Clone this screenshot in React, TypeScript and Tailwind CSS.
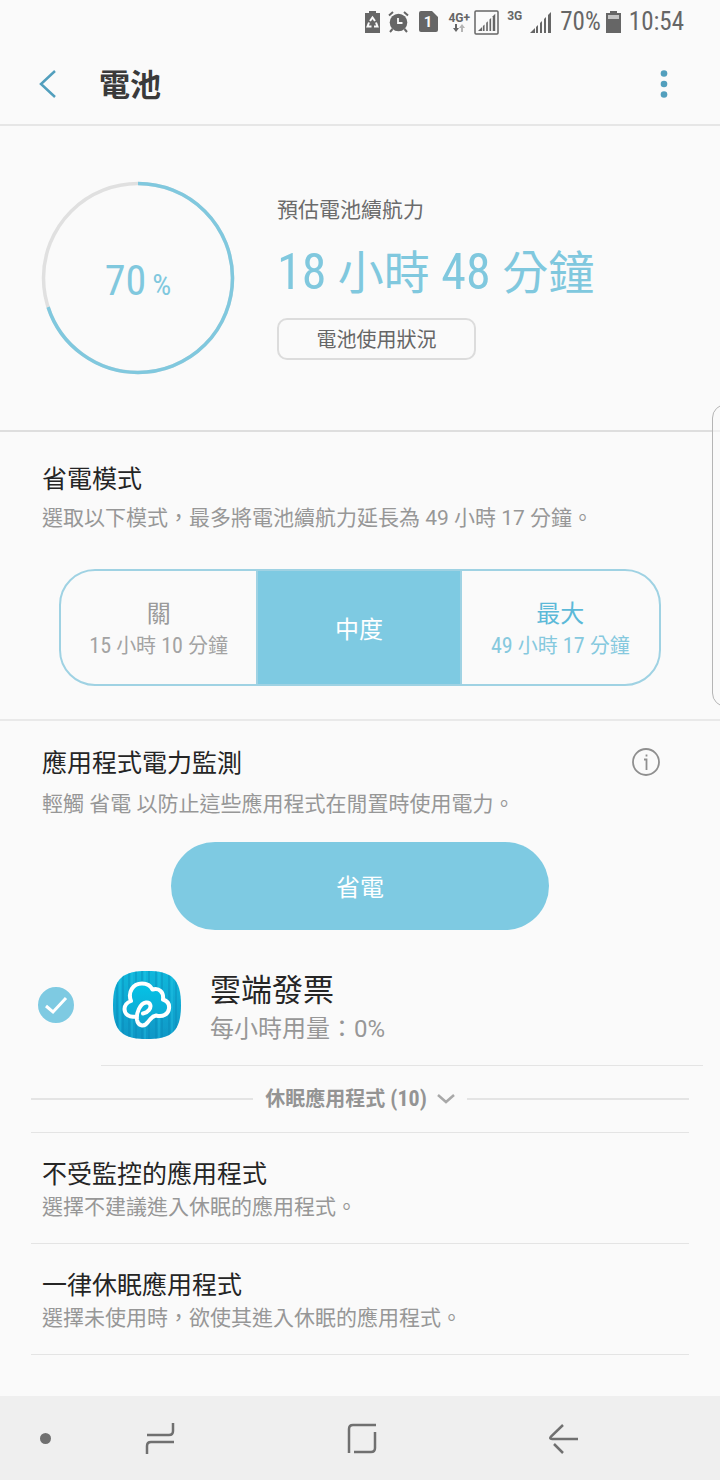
import { useState } from "react";
import type { ReactNode } from "react";

const BATTERY_LEVEL = 70;

const modes = [
  { id: "off", label: "關", hours: 15, minutes: 10, labelColor: "text-[#9a9a9a]", estimateColor: "text-[#a3a3a3]" },
  { id: "mid", label: "中度", labelColor: "text-white", estimateColor: "text-white" },
  { id: "max", label: "最大", hours: 49, minutes: 17, labelColor: "text-[#5cb9d8]", estimateColor: "text-[#86c9de]" },
];

const settings = [
  { title: "不受監控的應用程式", description: "選擇不建議進入休眠的應用程式。" },
  { title: "一律休眠應用程式", description: "選擇未使用時，欲使其進入休眠的應用程式。" },
];

function SignalBars() {
  return (
    <g fill="currentColor">
      <path d="M0 22 5 17V22Z" />
      <path d="M6 16 8 14V22H6Z" />
      <path d="M10 12 12 10V22H10Z" />
      <path d="M14 8 16 6V22H14Z" />
      <path d="M18 4 21 1V22H18Z" />
    </g>
  );
}

function StatusBar() {
  return (
    <div className="flex h-11 items-center justify-end pr-9 text-[#666666]">
      <svg className="mr-2 h-[22px] w-[15px]" viewBox="0 0 15 22" aria-hidden>
        <path d="M4 0H11V2H15V22H0V2H4Z" fill="currentColor" />
        <g fill="none" stroke="#fafafa" strokeWidth="2">
          <path d="M5 10 7.500 6.500 10 10" />
          <path d="M11 11.500 12.500 15.500H9" />
          <path d="M4 11.500 2.500 15.500H6.500" />
        </g>
      </svg>
      <svg className="mr-[10px] h-[22px] w-[21px]" viewBox="0 0 21 22" aria-hidden>
        <circle cx="10.500" cy="11.500" r="8.800" fill="currentColor" />
        <path d="M1 4.500 5 1M20 4.500 16 1M4.500 18 2 21M16.500 18 19 21" stroke="currentColor" strokeWidth="2" fill="none" />
        <path d="M10 7V12H14.500" stroke="#fafafa" strokeWidth="1.800" fill="none" />
      </svg>
      <svg className="mr-[10px] h-[22px] w-[19px]" viewBox="0 0 19 22" aria-hidden>
        <path d="M2 0H13L19 6V19Q19 21 17 21H2Q0 21 0 19V2Q0 0 2 0Z" fill="currentColor" />
        <text x="9" y="16" textAnchor="middle" fontSize="15" fontWeight="700" fill="#fafafa">1</text>
      </svg>
      <div className="mr-1 flex w-[22px] flex-col items-center">
        <span className="text-[12px] leading-[12px] font-bold">4G+</span>
        <svg className="h-[8px] w-[12px]" viewBox="0 0 12 8" aria-hidden>
          <path d="M2 0H4V4H6L3 8 0 4H2Z" fill="currentColor" />
          <path d="M8 8H10V4H12L9 0 6 4H8Z" fill="#b5b5b5" />
        </svg>
      </div>
      <svg className="mr-2 h-[25px] w-[25px]" viewBox="0 0 25 25" aria-hidden>
        <rect x="1" y="1" width="23" height="23" rx="1" fill="none" stroke="currentColor" strokeWidth="1.500" />
        <g transform="translate(4 3) scale(0.82)">
          <SignalBars />
        </g>
      </svg>
      <span className="mr-2 mb-3 text-[12px] leading-[12px] font-bold">3G</span>
      <svg className="mr-2 h-[22px] w-[22px]" viewBox="0 0 22 22" aria-hidden>
        <SignalBars />
      </svg>
      <span className="mr-[5px] font-['Roboto_Condensed',Roboto,sans-serif] text-[25px] leading-8">{BATTERY_LEVEL}%</span>
      <svg className="mr-2 h-[22px] w-[15px]" viewBox="0 0 15 22" aria-hidden>
        <path d="M4 0H11V2H15V22H0V2H4Z" fill="currentColor" />
        <path d="M2 4H13V8H2Z" fill="#c4c4c4" />
      </svg>
      <time className="font-['Roboto_Condensed',Roboto,sans-serif] text-[25px] leading-8">10:54</time>
    </div>
  );
}

function Header() {
  return (
    <header className="flex h-[82px] items-center border-b-2 border-[#e6e6e6] pr-[46px] pl-[38px]">
      <button type="button" aria-label="返回" className="flex h-12 w-[61px] items-center">
        <svg className="h-[28px] w-[18px]" viewBox="0 0 18 28" fill="none" stroke="#529fbd" strokeWidth="2.500" aria-hidden>
          <path d="M17 1 3 14 17 27" />
        </svg>
      </button>
      <h1 className="flex-1 pt-1 text-[31px] leading-10 font-bold text-[#3a3a3a]">電池</h1>
      <button type="button" aria-label="更多選項" className="flex h-12 w-[20px] items-center justify-center">
        <svg className="h-[28px] w-[8px]" viewBox="0 0 8 28" fill="#529fbd" aria-hidden>
          <circle cx="4" cy="3.500" r="3.300" />
          <circle cx="4" cy="14" r="3.300" />
          <circle cx="4" cy="24.500" r="3.300" />
        </svg>
      </button>
    </header>
  );
}

function BatteryRing({ level }: { level: number }) {
  return (
    <div className="grid size-[196px] shrink-0 place-items-center">
      <svg className="col-start-1 row-start-1 size-full -rotate-90" viewBox="0 0 196 196" fill="none" strokeWidth="3.500" aria-hidden>
        <circle cx="98" cy="98" r="94.500" stroke="#e0e0e0" />
        <circle cx="98" cy="98" r="94.500" stroke="#80c8de" pathLength="100" strokeDasharray={`${level} 100`} />
      </svg>
      <p className="col-start-1 row-start-1 flex items-baseline gap-[6px] pt-[6px] font-['Roboto_Condensed',Roboto,sans-serif] text-[#80c8de]">
        <span className="text-[42px] leading-[48px]">{level}</span>
        <span className="text-[30px] leading-8">%</span>
      </p>
    </div>
  );
}

function CloudAppIcon() {
  return (
    <svg className="size-[70px] shrink-0" viewBox="0 0 70 70" aria-hidden>
      <defs>
        <linearGradient id="iconBase" x1="0" y1="0" x2="0" y2="1">
          <stop offset="0" stopColor="#10b8dc" />
          <stop offset="1" stopColor="#1097c6" />
        </linearGradient>
        <linearGradient id="cloudFill" x1="0" y1="0" x2="0" y2="1">
          <stop offset="0" stopColor="#04c3e6" />
          <stop offset="1" stopColor="#11a5d0" />
        </linearGradient>
        <clipPath id="iconClip">
          <path d="M35 1C59 1 69 8 69 35S59 69 35 69 1 62 1 35 11 1 35 1Z" />
        </clipPath>
      </defs>
      <g clipPath="url(#iconClip)">
        <rect width="70" height="70" fill="url(#iconBase)" />
        <path d="M5 0V70M11 0V70M17 0V70M24 0V70M30 0V70M37 0V70M44 0V70M50 0V70M57 0V70M64 0V70" stroke="#0a86b5" strokeWidth="1.500" opacity="0.500" />
        <path d="M8 0V70M20 0V70M33 0V70M47 0V70M60 0V70" stroke="#2accea" strokeWidth="1.500" opacity="0.400" />
      </g>
      {/* cloud outline runs on into the letter-like loop at its bottom */}
      <path
        d="M24 46.500C17 48 12.500 44 12.500 39C12.500 35 15 32.500 19 31C15.500 22 21 13.500 30 13.500C35 13.500 38.500 15.500 40.500 19.500C47 17.500 52 22 51 29.500C56 31 57.500 34.500 57 38.500C56.500 44 51 47.500 44 45.500C40 46 38.500 49 36 52C32 57.500 26 56 25 50C24 43 28 33.500 34 32.500C39 32 39.500 37 37 40C35.500 42 33.500 43 31 43.500"
        fill="url(#cloudFill)"
        stroke="#ffffff"
        strokeWidth="4"
        strokeLinecap="round"
        strokeLinejoin="round"
      />
    </svg>
  );
}

function NavButton({ label, children }: { label: string; children: ReactNode }) {
  return (
    <button type="button" aria-label={label} className="flex h-full flex-1 items-center justify-center pt-[2px]">
      <svg className="size-8" viewBox="0 0 32 32" fill="none" stroke="#707070" strokeWidth="2.500" aria-hidden>
        {children}
      </svg>
    </button>
  );
}

function NavBar() {
  return (
    <nav className="mt-auto flex h-[84px] items-center bg-[#efefef] pr-[55px]">
      <div className="w-[59px] pl-10">
        <div className="size-[11px] rounded-full bg-[#707070]" />
      </div>
      <NavButton label="最近使用">
        <path d="M3 12H25Q29 12 29 8V0" />
        <path d="M30 19H7Q3 19 3 23V31" />
      </NavButton>
      <NavButton label="首頁">
        <path d="M3 30V6Q3 2 7 2H30" />
        <path d="M29 9V25Q29 29 25 29H8" />
      </NavButton>
      <NavButton label="返回">
        <path d="M30 16H4Q1 16 3 13.500L15 2" />
        <path d="M6 21 15 30" />
      </NavButton>
    </nav>
  );
}

export default function App() {
  const [mode, setMode] = useState("mid");
  const [selected, setSelected] = useState(true);

  return (
    <div lang="zh-Hant-TW" className="relative flex min-h-screen flex-col overflow-x-hidden bg-[#fafafa] font-[Roboto,'Noto_Sans_CJK_TC',sans-serif]">
      <StatusBar />
      <Header />

      <main className="pb-8">
        <section className="flex items-center gap-[41px] border-b-2 border-[#dedede] px-10 py-[54px]">
          <BatteryRing level={BATTERY_LEVEL} />
          <div className="flex flex-col items-start">
            <p className="text-[21px] leading-7 text-[#6b6b6b]">預估電池續航力</p>
            <p className="mt-5 h-14 font-['Roboto_Condensed','Noto_Sans_CJK_TC',sans-serif] text-[50px] leading-[56px] whitespace-nowrap text-[#80c8de]">
              18 <span className="text-[46px]">小時</span> 48 <span className="text-[46px]">分鐘</span>
            </p>
            <button type="button" className="mt-[18px] h-[42px] w-[199px] rounded-[10px] border-2 border-[#dcdcdc] pt-[2px] text-[20px] leading-7 text-[#666666]">
              電池使用狀況
            </button>
          </div>
        </section>

        <section className="border-b-2 border-[#e9e9e9] pt-8 pb-[33px]">
          <h2 className="px-[42px] text-[25px] leading-8 text-[#252525]">省電模式</h2>
          <p className="mt-2 px-[42px] text-[21px] leading-7 text-[#979797]">選取以下模式，最多將電池續航力延長為 49 小時 17 分鐘。</p>
          <div
            role="group"
            aria-label="省電模式"
            className="mx-[59px] mt-[37px] grid h-[117px] grid-cols-[33fr_34fr_33fr] divide-x-2 divide-[#9fd2e3] overflow-hidden rounded-[36px] border-2 border-[#9fd2e3]"
          >
            {modes.map((m) => (
              <button
                key={m.id}
                type="button"
                aria-pressed={mode === m.id}
                onClick={() => setMode(m.id)}
                className={`flex flex-col items-center justify-center pt-1 ${m.id === "mid" ? "bg-[#7ecae2]" : ""}`}
              >
                <span className={`text-[24px] leading-8 ${m.labelColor}`}>{m.label}</span>
                {m.hours && (
                  <span className={`font-['Roboto_Condensed','Noto_Sans_CJK_TC',sans-serif] text-[22px] leading-8 whitespace-nowrap ${m.estimateColor}`}>
                    {m.hours} <span className="text-[20px]">小時</span> {m.minutes} <span className="text-[20px]">分鐘</span>
                  </span>
                )}
              </button>
            ))}
          </div>
        </section>

        <section className="pt-[27px]">
          <div className="flex items-start justify-between pr-[60px] pl-[42px]">
            <h2 className="text-[25px] leading-8 text-[#252525]">應用程式電力監測</h2>
            <button type="button" aria-label="資訊">
              <svg className="size-[28px]" viewBox="0 0 28 28" fill="none" stroke="#8f8f8f" strokeWidth="1.800" aria-hidden>
                <circle cx="14" cy="14" r="13" />
                <path d="M12 11.500H14.500V22M14.500 6.500V8.500" />
              </svg>
            </button>
          </div>
          <p className="mt-[10px] px-[42px] text-[21px] leading-7 text-[#979797]">輕觸 省電 以防止這些應用程式在閒置時使用電力。</p>
          <button type="button" className="mx-auto mt-6 block h-[88px] w-[378px] rounded-full bg-[#7ecae2] pt-1 text-[24px] leading-8 text-white">
            省電
          </button>

          <div className="flex items-center pt-[39px] pr-[42px] pb-6 pl-[38px]">
            <label className="flex flex-1 items-center">
              <span className="mr-[38px] grid size-9 shrink-0 place-items-center">
                <input
                  type="checkbox"
                  checked={selected}
                  onChange={() => setSelected(!selected)}
                  className="col-start-1 row-start-1 size-9 appearance-none rounded-full border-2 border-[#7ecae2] checked:bg-[#7ecae2]"
                />
                <svg className="pointer-events-none col-start-1 row-start-1 size-6" viewBox="0 0 24 24" fill="none" stroke="#ffffff" strokeWidth="3" aria-hidden>
                  <path d="M2 13 9 19 22 5" />
                </svg>
              </span>
              <CloudAppIcon />
              <span className="ml-7 flex flex-col pt-1">
                <span className="text-[31px] leading-9 text-[#252525]">雲端發票</span>
                <span className="mt-2 text-[24px] leading-6 text-[#979797]">每小時用量：0%</span>
              </span>
            </label>
          </div>
          <hr className="mr-[17px] ml-[101px] border-[#e4e4e4]" />

          <button type="button" className="flex h-[66px] w-full items-center px-[31px] text-[#949494]">
            <span className="h-[2px] flex-1 bg-[#e4e4e4]" />
            <span className="mr-[10px] ml-3 font-['Roboto_Condensed','Noto_Sans_CJK_TC',sans-serif] text-[22px] leading-7 font-bold">
              <span className="text-[20px]">休眠應用程式</span> (10)
            </span>
            <svg className="mr-3 h-[10px] w-[18px]" viewBox="0 0 18 10" fill="none" stroke="#a8a8a8" strokeWidth="2.500" aria-hidden>
              <path d="M1 1 9 8 17 1" />
            </svg>
            <span className="h-[2px] flex-1 bg-[#e4e4e4]" />
          </button>

          <ul className="mx-[31px] border-t border-[#e4e4e4]">
            {settings.map((s) => (
              <li key={s.title} className="border-b border-[#e4e4e4]">
                <a href="#" className="block px-[11px] pt-[26px] pb-[22px]">
                  <span className="block text-[25px] leading-8 text-[#252525]">{s.title}</span>
                  <span className="mt-[2px] block text-[21px] leading-7 text-[#979797]">{s.description}</span>
                </a>
              </li>
            ))}
          </ul>
        </section>
      </main>

      <NavBar />

      {/* edge panel handle, hangs over the right side of the page */}
      <div className="absolute top-[404px] -right-2 h-[303px] w-4 rounded-l-[14px] border border-[#b5b5b5] bg-[#fafafa]/60" />
    </div>
  );
}
